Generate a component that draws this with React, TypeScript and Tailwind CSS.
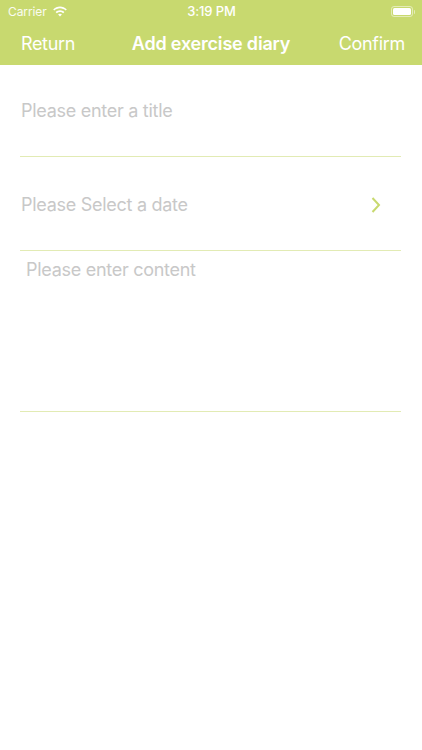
import React from "react";

function WifiIcon() {
    return (
        <svg width="16" height="12" viewBox="0 0 16 12" fill="#fff">
            <path d="M8 2.3c2.2 0 4.2.9 5.7 2.3l1.1-1.2C13 1.7 10.6.6 8 .6S3 1.7 1.2 3.4l1.1 1.2C3.8 3.2 5.8 2.3 8 2.3z" />
            <path d="M8 5.9c1.2 0 2.3.5 3.2 1.3l1.2-1.2C11.200 4.900 9.700 4.200 8 4.200s-3.200.7-4.400 1.800l1.200 1.200C5.700 6.400 6.800 5.900 8 5.900z" />
            <path d="M8 7.800c-.8 0-1.400.3-1.900.8L8 10.600l1.900-2c-.5-.5-1.100-.8-1.900-.8z" />
        </svg>
    );
}

function BatteryIcon() {
    return (
        <div className="flex items-center">
            <div className="w-[22px] h-[11px] rounded-[3px] border border-white/50 p-[1px]">
                <div className="w-full h-full rounded-[1.5px] bg-white" />
            </div>
            <div className="w-[1px] h-[4px] ml-[1px] rounded-r-sm bg-white/50" />
        </div>
    );
}

export default function App() {
    return (
        <div className="min-h-[750px] bg-white font-['Inter','Liberation_Sans',sans-serif]">
            <div className="h-[65px] bg-[#c8d96f] text-white">
                <div className="h-[22px] flex items-center justify-between pl-[8px] pr-[7px] pt-[1px]">
                    <div className="w-[100px] flex items-center gap-[5px] text-[12px] tracking-[-0.1px] text-white/90">
                        <span>Carrier</span>
                        <WifiIcon />
                    </div>
                    <span className="text-[13px] tracking-[-0.1px] font-medium">3:19 PM</span>
                    <div className="w-[100px] flex justify-end">
                        <BatteryIcon />
                    </div>
                </div>
                <div className="h-[43px] pb-[1px] flex items-center justify-between pl-[21px] pr-[17px]">
                    <span className="w-[80px] text-[18px] tracking-[-0.35px]">Return</span>
                    <span className="text-[18px] font-semibold tracking-[-0.2px]">Add exercise diary</span>
                    <span className="w-[84px] text-right text-[18px] tracking-[-0.3px]">Confirm</span>
                </div>
            </div>

            <div className="pl-[20px] pr-[21px] text-[#c8c8c8] text-[18px] tracking-[-0.28px]">
                <div className="h-[92px] pt-[33px] pl-[1px] border-b border-[#e2ebb4]">
                    <div className="leading-[26px]">Please enter a title</div>
                </div>
                <div className="h-[94px] pt-[35px] pl-[1px] pr-[20px] border-b border-[#e2ebb4] flex items-start justify-between">
                    <div className="leading-[26px]">Please Select a date</div>
                    <svg width="10" height="16" viewBox="0 0 10 16" fill="none" stroke="#c8d96f" strokeWidth="2" className="mt-[5px]">
                        <path d="M1.500 1l6.500 7-6.500 7" />
                    </svg>
                </div>
                <div className="h-[161px] pt-[6px] pl-[6px] border-b border-[#e2ebb4]">
                    <div className="leading-[26px]">Please enter content</div>
                </div>
            </div>
        </div>
    );
}
